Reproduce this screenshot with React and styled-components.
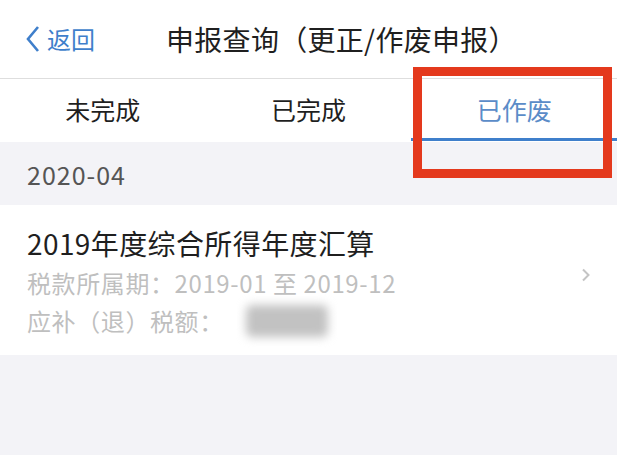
import React from "react";
import styled, { createGlobalStyle } from "styled-components";

const GlobalStyle = createGlobalStyle`
  html, body {
    margin: 0;
    padding: 0;
    background: #f3f3f7;
  }
  body {
    font-family: "Noto Sans CJK SC", "Noto Sans", sans-serif;
  }
`;

const BLUE = "#3f7fcb";

const Page = styled.div`
  width: 617px;
  min-height: 455px;
  background: #f3f3f7;
  overflow: hidden;
`;

const NavBar = styled.div`
  height: 78px;
  display: flex;
  align-items: center;
  padding-left: 25px;
  background: #fff;
  border-bottom: 1px solid #dedede;
`;

const BackButton = styled.div`
  display: flex;
  align-items: center;
  gap: 6px;
  color: ${BLUE};
  font-size: 24px;
  line-height: 1;
`;

const Title = styled.div`
  margin-left: 71px;
  font-size: 28px;
  color: #1f1f1f;
  line-height: 1;
  letter-spacing: 0.3px;
`;

const Tabs = styled.div`
  display: grid;
  grid-template-columns: repeat(3, 1fr);
  height: 63px;
  background: #fff;
`;

const Tab = styled.div`
  position: relative;
  display: flex;
  align-items: center;
  justify-content: center;
  padding-bottom: 4px;
  font-size: 25px;
  color: ${(p) => (p.$active ? "#5b8cc8" : "#1f1f1f")};

  &::after {
    content: "";
    display: ${(p) => (p.$active ? "block" : "none")};
    position: absolute;
    left: 0;
    right: 0;
    bottom: 1px;
    height: 3px;
    background: ${BLUE};
  }
`;

const Highlight = styled.div`
  position: absolute;
  left: 2px;
  right: 5px;
  top: -12px;
  bottom: -36px;
  border: 9px solid #e4391d;
  z-index: 2;
`;

const SectionHeader = styled.div`
  height: 63px;
  display: flex;
  align-items: center;
  padding-left: 27px;
  font-size: 25px;
  letter-spacing: 1px;
  color: #555;
`;

const Item = styled.div`
  display: flex;
  align-items: center;
  height: 150px;
  padding: 0 27px;
  background: #fff;
`;

const ItemBody = styled.div`
  flex: 1;
  display: flex;
  flex-direction: column;
  gap: 3px;
  padding-top: 2px;
`;

const ItemTitle = styled.div`
  font-size: 28px;
  color: #1f1f1f;
  line-height: 38px;
  letter-spacing: 0.4px;
`;

const Meta = styled.div`
  display: flex;
  align-items: center;
  font-size: 24px;
  color: #bfbfbf;
  line-height: 35px;
  letter-spacing: 0.6px;
`;

const Blurred = styled.span`
  display: inline-block;
  width: 82px;
  height: 32px;
  margin-left: 22px;
  border-radius: 6px;
  background: #c2c2c2;
  filter: blur(5px);
`;

const ChevronWrap = styled.div`
  margin-bottom: 10px;
  display: flex;
`;

const Chevron = () => (
  <ChevronWrap>
    <svg width="10" height="14" viewBox="0 0 10 14">
      <path d="M3 1.5 L8.5 7 L3 12.5" fill="none" stroke="#c4c4c4" strokeWidth="2" />
    </svg>
  </ChevronWrap>
);

const BackChevron = () => (
  <svg width="16" height="28" viewBox="0 0 16 28">
    <path d="M13 2 L3 14 L13 26" fill="none" stroke={BLUE} strokeWidth="2.6" />
  </svg>
);

export default function App() {
  return (
    <Page>
      <GlobalStyle />
      <NavBar>
        <BackButton>
          <BackChevron />
          返回
        </BackButton>
        <Title>申报查询（更正/作废申报）</Title>
      </NavBar>
      <Tabs>
        <Tab>未完成</Tab>
        <Tab>已完成</Tab>
        <Tab $active>
          已作废
          <Highlight />
        </Tab>
      </Tabs>
      <SectionHeader>2020-04</SectionHeader>
      <Item>
        <ItemBody>
          <ItemTitle>2019年度综合所得年度汇算</ItemTitle>
          <Meta>税款所属期：2019-01 至 2019-12</Meta>
          <Meta>
            应补（退）税额：
            <Blurred />
          </Meta>
        </ItemBody>
        <Chevron />
      </Item>
    </Page>
  );
}
